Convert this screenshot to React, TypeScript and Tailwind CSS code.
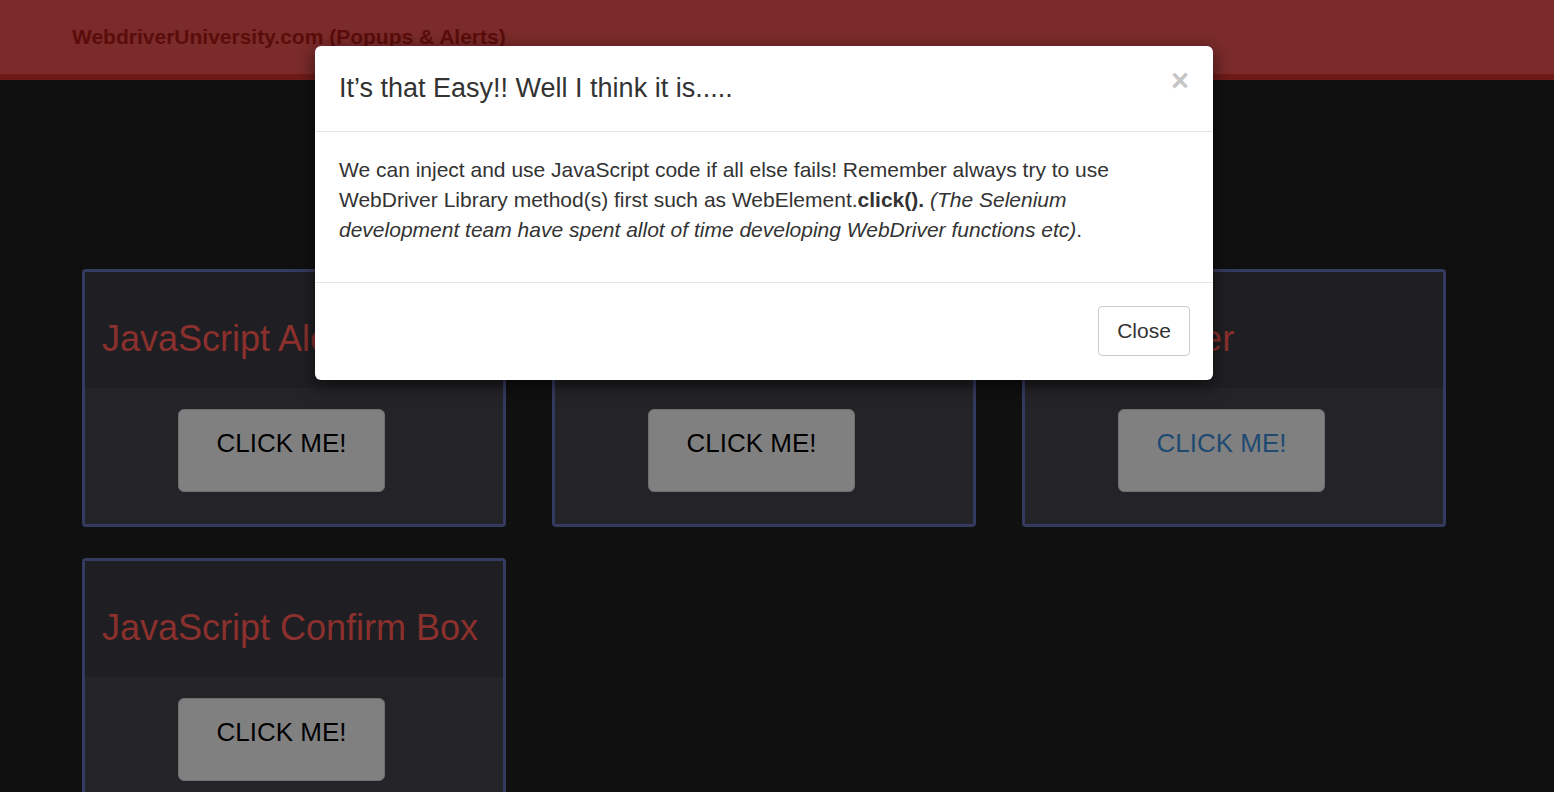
import { useState } from 'react';

const cards = [
  { title: 'JavaScript Alert', btn: 'text-black' },
  { title: 'Modal Popup', btn: 'text-black' },
  { title: 'Ajax Loader', btn: 'text-[#1e4a72]' },
  { title: 'JavaScript Confirm Box', btn: 'text-black' },
];

function Card({ title, btn }: { title: string; btn: string }) {
  return (
    <div className="w-[424px] h-[258px] border-[3px] border-[#353b60] rounded-[4px] overflow-hidden flex flex-col">
      <div className="h-[116px] shrink-0 bg-[#1f1f23] flex items-center px-[17px]">
        <h2 className="text-[36px] leading-none text-[#8b302c] pt-[17px]">{title}</h2>
      </div>
      <div className="flex-1 bg-[#232328] flex justify-center pt-[21px] pr-[25px]">
        <button className={`w-[207px] h-[83px] bg-[#808080] border border-[#6e6e6e] rounded-[6px] text-[26px] leading-none pb-[16px] ${btn}`}>
          CLICK ME!
        </button>
      </div>
    </div>
  );
}

export default function App() {
  const [open, setOpen] = useState(true);

  return (
    <div className="relative h-[792px] overflow-hidden bg-[#101010] font-[family-name:'Liberation_Sans',Arial,sans-serif]">
      <nav className="h-[80px] bg-[#7a2b2a] border-b-[6px] border-[#6e1a17] flex items-center pl-[72px]">
        <span className="text-[21px] font-bold text-[#5a0d0b]">WebdriverUniversity.com (Popups &amp; Alerts)</span>
      </nav>

      <div className="pl-[82px] pt-[189px] flex flex-wrap gap-x-[46px] gap-y-[31px] w-[1500px]">
        {cards.map(c => (
          <Card key={c.title} title={c.title} btn={c.btn} />
        ))}
      </div>

      {open && (
        <div className="absolute left-[315px] top-[46px] w-[898px] bg-white rounded-[6px] shadow-[0_5px_18px_rgba(0,0,0,0.55)] text-[#333]">
          <div className="h-[86px] border-b border-[#e5e5e5] flex items-start justify-between pl-[24px] pr-[24px] pt-[27px]">
            <h4 className="text-[27px] leading-[30px]">It’s that Easy!! Well I think it is.....</h4>
            <button onClick={() => setOpen(false)} className="text-[31px] font-bold leading-none text-[#c6c6c6] -mt-[8px]">×</button>
          </div>
          <div className="h-[151px] border-b border-[#e5e5e5] px-[24px] pt-[23px]">
            <p className="text-[21px] leading-[30px]">
              We can inject and use JavaScript code if all else fails! Remember always try to use WebDriver Library method(s) first such as WebElement.<b>click().</b> <i>(The Selenium development team have spent allot of time developing WebDriver functions etc)</i>.
            </p>
          </div>
          <div className="h-[97px] flex justify-end items-start pt-[23px] pr-[23px]">
            <button onClick={() => setOpen(false)} className="w-[92px] h-[50px] border border-[#cccccc] rounded-[4px] text-[21px] text-[#333] bg-white">
              Close
            </button>
          </div>
        </div>
      )}
    </div>
  );
}
